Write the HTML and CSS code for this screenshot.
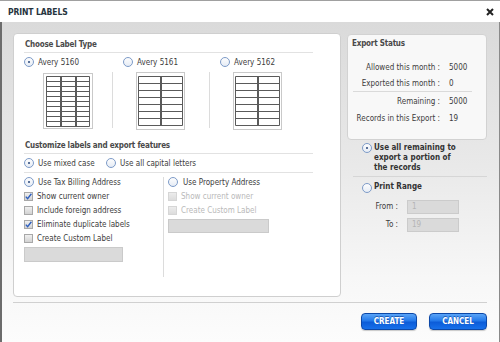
FILE: index.html
```html
<!DOCTYPE html>
<html>
<head>
<meta charset="utf-8">
<link rel="stylesheet" href="styles.css">
</head>
<body>
<div class="dialog">
  <div class="titlebar">
    <span class="title">PRINT LABELS</span>
    <svg class="close" width="8" height="8" viewBox="0 0 8 8"><path d="M1 1L7 7M7 1L1 7" stroke="#222" stroke-width="2"/></svg>
  </div>
  <div class="body">
    <div class="main">
      <div class="panel">
        <div class="sec-title">Choose Label Type</div>
        <div class="types">
          <div class="type t1">
            <div class="opt"><span class="radio on"></span>Avery 5160</div>
            <div class="sheet-wrap">
              <svg width="50" height="56" viewBox="0 0 50 56">
                <rect x="0.5" y="0.5" width="49" height="55" fill="#fff" stroke="#c9c9c9"/>
                <path d="M3.5 3.5H46.5M3.5 8.5H46.5M3.5 13.5H46.5M3.5 18.5H46.5M3.5 23.5H46.5M3.5 28.5H46.5M3.5 33.5H46.5M3.5 38.5H46.5M3.5 43.5H46.5M3.5 48.5H46.5M3.5 53.5H46.5M3.5 3.5V53.5M17.5 3.5V53.5M18.5 3.5V53.5M32.5 3.5V53.5M33.5 3.5V53.5M46.5 3.5V53.5" stroke="#5a5a5a" fill="none"/>
              </svg>
            </div>
          </div>
          <div class="type t2">
            <div class="opt"><span class="radio"></span>Avery 5161</div>
            <div class="sheet-wrap">
              <svg width="49" height="58" viewBox="0 0 49 58">
                <rect x="0.5" y="0.5" width="48" height="57" fill="#fff" stroke="#c9c9c9"/>
                <path d="M2.5 4.5H46.5M2.5 11.5H46.5M2.5 18.5H46.5M2.5 25.5H46.5M2.5 32.5H46.5M2.5 39.5H46.5M2.5 46.5H46.5M2.5 53.5H46.5M2.5 4.5V53.5M24.5 4.5V53.5M25.5 4.5V53.5M46.5 4.5V53.5" stroke="#5a5a5a" fill="none"/>
              </svg>
            </div>
          </div>
          <div class="type t3">
            <div class="opt"><span class="radio"></span>Avery 5162</div>
            <div class="sheet-wrap">
              <svg width="49" height="58" viewBox="0 0 49 58">
                <rect x="0.5" y="0.5" width="48" height="57" fill="#fff" stroke="#c9c9c9"/>
                <path d="M2.5 4.5H46.5M2.5 11.5H46.5M2.5 18.5H46.5M2.5 25.5H46.5M2.5 32.5H46.5M2.5 39.5H46.5M2.5 46.5H46.5M2.5 53.5H46.5M2.5 4.5V53.5M24.5 4.5V53.5M25.5 4.5V53.5M46.5 4.5V53.5" stroke="#5a5a5a" fill="none"/>
              </svg>
            </div>
          </div>
        </div>
        <div class="sec-title second">Customize labels and export features</div>
        <div class="case-row">
          <div class="opt mixed"><span class="radio on"></span>Use mixed case</div>
          <div class="opt"><span class="radio"></span>Use all capital letters</div>
        </div>
        <div class="cols">
          <div class="col col-a">
            <div class="opt"><span class="radio on"></span>Use Tax Billing Address</div>
            <div class="opt"><span class="cb"><svg width="7" height="7" viewBox="0 0 7 7"><path d="M0.8 3.6L2.6 5.6L6.4 0.8" stroke="#2d5fbf" stroke-width="1.4" fill="none"/></svg></span>Show current owner</div>
            <div class="opt"><span class="cb"></span>Include foreign address</div>
            <div class="opt"><span class="cb"><svg width="7" height="7" viewBox="0 0 7 7"><path d="M0.8 3.6L2.6 5.6L6.4 0.8" stroke="#2d5fbf" stroke-width="1.4" fill="none"/></svg></span>Eliminate duplicate labels</div>
            <div class="opt"><span class="cb"></span>Create Custom Label</div>
            <div class="field wide-a"></div>
          </div>
          <div class="col col-b">
            <div class="opt first"><span class="radio"></span>Use Property Address</div>
            <div class="opt disabled"><span class="cb off"></span>Show current owner</div>
            <div class="opt disabled"><span class="cb off"></span>Create Custom Label</div>
            <div class="field wide-b"></div>
          </div>
        </div>
      </div>
      <div class="side">
        <div class="status">
          <div class="st-title">Export Status</div>
          <div class="st-row r1"><span class="k">Allowed this month :</span><span class="v">5000</span></div>
          <div class="st-row"><span class="k">Exported this month :</span><span class="v">0</span></div>
          <div class="st-sep"></div>
          <div class="st-row r3"><span class="k">Remaining :</span><span class="v">5000</span></div>
          <div class="st-row r4"><span class="k">Records in this Export :</span><span class="v">19</span></div>
        </div>
        <div class="bopt remain"><span class="radio on"></span><span class="btxt">Use all remaining to<br>export a portion of<br>the records</span></div>
        <div class="side-sep"></div>
        <div class="bopt range"><span class="radio"></span><span class="btxt">Print Range</span></div>
        <div class="rng from"><span class="rl">From :</span><span class="rin">1</span></div>
        <div class="rng to"><span class="rl">To :</span><span class="rin">19</span></div>
      </div>
    </div>
    <div class="footer">
      <button class="btn create">CREATE</button>
      <button class="btn cancel">CANCEL</button>
    </div>
  </div>
</div>
</body>
</html>
```

FILE: styles.css
```css
html, body {
  margin: 0;
  padding: 0;
  background: #fff;
}
.dialog {
  width: 500px;
  height: 342px;
  display: flex;
  flex-direction: column;
  font-family: "DejaVu Sans Condensed", "DejaVu Sans", sans-serif;
  font-size: 8px;
  color: #3c3c3c;
  overflow: hidden;
}
.titlebar {
  height: 22px;
  flex: none;
  box-sizing: border-box;
  background: #fff;
  display: flex;
  align-items: center;
  justify-content: space-between;
  padding: 1px 8px 0 8px;
  border-top: 1px solid #a0a0a0;
}
.title {
  font-weight: bold;
  font-size: 8.5px;
  color: #26343e;
  letter-spacing: -0.1px;
}
.close {
  display: block;
  margin-right: -2px;
}
.body {
  flex: 1;
  box-sizing: border-box;
  background: linear-gradient(#dadada, #e9e9e9 45%, #f7f7f7 80%, #fcfcfc);
  border-left: 2px solid #6c6c6c;
  border-right: 1px solid #8a8a8a;
  padding: 11px 12px 0 11px;
}
.main {
  display: flex;
  gap: 6px;
  height: 264px;
}
.panel {
  width: 328px;
  height: 264px;
  box-sizing: border-box;
  background: #fff;
  border: 1px solid #cfcfcf;
  border-radius: 4px;
  flex: none;
}
.sec-title {
  margin: 0 27px 0 10px;
  padding: 3px 0 0 1px;
  line-height: 15px;
  font-weight: bold;
  font-size: 8px;
  letter-spacing: -0.2px;
  color: #4a4a4a;
  border-bottom: 1px solid #e2e2e2;
}
.sec-title.second {
  margin-top: 5px;
}
.types {
  display: flex;
  margin-top: 2px;
}
.type {
  width: 97px;
}
.type.t1 {
  width: 98px;
}
.type .opt {
  padding-left: 11px;
}
.type.t1 .opt {
  padding-left: 10px;
}
.opt {
  display: flex;
  align-items: center;
  height: 14px;
  white-space: nowrap;
}
.radio {
  flex: none;
  width: 10px;
  height: 10px;
  box-sizing: border-box;
  border-radius: 50%;
  border: 1px solid #7d9bc8;
  background: linear-gradient(#fdfdfd, #e6ecf5);
  margin-right: 4px;
  position: relative;
}
.radio.on::after {
  content: "";
  position: absolute;
  left: 3px;
  top: 3px;
  width: 2px;
  height: 2px;
  border-radius: 50%;
  background: #29467a;
}
.cb {
  flex: none;
  width: 9px;
  height: 9px;
  box-sizing: border-box;
  border: 1px solid #a8a8a8;
  background: linear-gradient(#f0f0f0, #d2d2d2);
  margin-right: 4px;
  display: flex;
  align-items: center;
  justify-content: center;
}
.cb svg {
  display: block;
}
.cb.off {
  border-color: #d6d6d6;
  background: linear-gradient(#ececec, #dcdcdc);
}
.opt.disabled {
  color: #b9b9b9;
}
.sheet-wrap {
  margin-top: 3px;
  height: 58px;
  display: flex;
  justify-content: center;
  align-items: flex-start;
}
.sheet-wrap svg {
  display: block;
}
.t1 .sheet-wrap {
  padding-left: 9px;
  padding-top: 1px;
  height: 57px;
}
.t2 .sheet-wrap,
.t3 .sheet-wrap {
  border-left: 1px solid #dcdcdc;
  height: 56px;
}
.t2 .sheet-wrap svg,
.t3 .sheet-wrap svg {
  margin-left: -1px;
}
.case-row {
  display: flex;
  margin: 0 27px 0 10px;
  padding: 2px 0 2px;
  border-bottom: 1px solid #e2e2e2;
}
.case-row .mixed {
  width: 82px;
}
.cols {
  display: flex;
}
.col-a {
  width: 149px;
  box-sizing: border-box;
  padding: 2px 0 0 10px;
}
.col-b {
  margin-top: 4px;
  height: 100px;
  border-left: 1px solid #dcdcdc;
  padding-left: 4px;
}
.col-b .first {
  margin-top: -2px;
}
.col-b .radio {
  margin-right: 5px;
}
.field {
  background: #dadada;
  border: 1px solid #cacaca;
  box-sizing: border-box;
}
.wide-a {
  width: 99px;
  height: 15px;
  margin-top: 2px;
}
.wide-b {
  width: 101px;
  height: 14px;
  margin-top: 2px;
}
.side {
  width: 140px;
  flex: none;
}
.status {
  margin-top: 1px;
  height: 106px;
  box-sizing: border-box;
  border: 1px solid #d2d2d2;
  border-radius: 4px;
  background: #f8f8f8;
}
.st-title {
  padding: 2px 0 0 4px;
  line-height: 14px;
  font-weight: bold;
  font-size: 8px;
  letter-spacing: -0.2px;
  color: #4a4a4a;
}
.st-row {
  display: flex;
  height: 16px;
  align-items: center;
}
.st-row.r1 {
  margin-top: 8px;
}
.st-row.r3 {
  margin-top: 1px;
}
.st-row.r4 {
  margin-top: 1px;
}
.k {
  width: 92px;
  text-align: right;
  flex: none;
}
.v {
  margin-left: 9px;
}
.st-sep {
  margin: 0 14px 0 5px;
  border-top: 1px solid #dadada;
}
.bopt {
  display: flex;
  align-items: flex-start;
  padding-left: 15px;
  font-weight: bold;
  color: #333;
}
.bopt .radio {
  margin-top: 0;
  margin-right: 2px;
}
.btxt {
  line-height: 10px;
  margin-top: -0.5px;
}
.remain {
  margin-top: 3px;
}
.side-sep {
  margin: 3px 0 0 6px;
  border-top: 1px solid #d6d6d6;
}
.range {
  margin-top: 6px;
}
.rng {
  display: flex;
  align-items: center;
  padding-left: 26px;
}
.rng.from {
  margin-top: 7px;
}
.rng.to {
  margin-top: 4px;
}
.rl {
  width: 25px;
  text-align: right;
  margin-right: 9px;
}
.rin {
  width: 52px;
  height: 14px;
  box-sizing: border-box;
  background: #dadada;
  border: 1px solid #cbcbcb;
  color: #b5b5b5;
  padding-left: 4px;
  line-height: 12px;
}
.footer {
  margin-top: 5px;
  border-top: 1px solid #d0d0d0;
  display: flex;
  justify-content: flex-end;
  gap: 12px;
  padding-top: 10px;
}
.btn {
  height: 17px;
  box-sizing: border-box;
  border: 1px solid #0c48a8;
  border-radius: 4px;
  background: linear-gradient(#5aa4f7, #2379ea 45%, #0c5cd8 55%, #1670ea);
  color: #fff;
  font-family: "DejaVu Sans Condensed", "DejaVu Sans", sans-serif;
  font-weight: bold;
  font-size: 8px;
  padding: 0;
  text-shadow: 0 -1px 0 rgba(0, 40, 120, 0.5);
  box-shadow: 0 1px 1px rgba(0, 0, 0, 0.2);
}
.btn.create {
  width: 56px;
}
.btn.cancel {
  width: 58px;
}
```
